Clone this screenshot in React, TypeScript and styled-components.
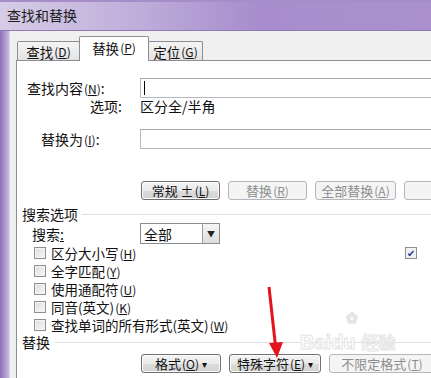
import { ReactNode } from "react";
import styled, { createGlobalStyle, css } from "styled-components";

const GlobalStyle = createGlobalStyle`
    body{
        margin:0;
        font-family:"Noto Sans CJK SC","Liberation Sans",sans-serif;
        background:#ffffff;
    }
`

const Key = ({k}:{k:string}) => <Mn>(<u>{k}</u>)</Mn>

const Button = ({children, disabled, w, menu}:{
    children:ReactNode, disabled?:boolean, w:number, menu?:boolean
}) => (
    <StyledButton disabled={disabled} $w={w}>
        {children}
        {menu && <Caret>▾</Caret>}
    </StyledButton>
)

const Check = ({label, checked}:{label?:ReactNode, checked?:boolean}) => (
    <CheckRow>
        <Box $checked={checked}>{checked && '✔'}</Box>
        {label && <CheckText>{label}</CheckText>}
    </CheckRow>
)

export default function App(){
    return (
        <>
            <GlobalStyle/>
            <Window>
                <TitleBar>查找和替换</TitleBar>
                <Body>
                    <Frame/>
                    <Content>
                        <TabRow>
                            <Tab $w={63}>查找<Key k="D"/></Tab>
                            <Tab $w={70} $active>替换<Key k="P"/></Tab>
                            <Tab $w={55}>定位<Key k="G"/></Tab>
                        </TabRow>
                        <Panel>
                            <FieldRow $top={17}>
                                <Label $pad={10}>查找内容<Key k="N"/>:</Label>
                                <Input><Cursor/></Input>
                            </FieldRow>
                            <FieldRow $top={0}>
                                <Label $pad={0} $right>选项:</Label>
                                <Plain>区分全/半角</Plain>
                            </FieldRow>
                            <FieldRow $top={15}>
                                <Label $pad={24}>替换为<Key k="I"/>:</Label>
                                <Input/>
                            </FieldRow>
                            <ButtonRow $top={32}>
                                <Button w={79}>常规 ± <Key k="L"/></Button>
                                <Button w={79} disabled>替换<Key k="R"/></Button>
                                <Button w={81} disabled>全部替换<Key k="A"/></Button>
                                <Button w={80} disabled>查找</Button>
                            </ButtonRow>
                            <Group $top={7} $indent={5}>搜索选项</Group>
                            <FieldRow $top={2}>
                                <Label $pad={15}>搜索<u>:</u></Label>
                                <Select>
                                    <span>全部</span>
                                    <DropBtn>▼</DropBtn>
                                </Select>
                            </FieldRow>
                            <Checks>
                                <FirstRow>
                                    <Check label={<>区分大小写<Key k="H"/></>}/>
                                    <Check checked/>
                                </FirstRow>
                                <Check label={<>全字匹配<Key k="Y"/></>}/>
                                <Check label={<>使用通配符<Key k="U"/></>}/>
                                <Check label={<>同音(英文)<Key k="K"/></>}/>
                                <Check label={<>查找单词的所有形式(英文)<Key k="W"/></>}/>
                            </Checks>
                            <Group $top={1} $indent={5}>替换</Group>
                            <ButtonRow $top={5}>
                                <Button w={80} menu>格式<Key k="O"/></Button>
                                <Button w={92} menu>特殊字符<Key k="E"/></Button>
                                <Button w={106} disabled>不限定格式<Key k="T"/></Button>
                            </ButtonRow>
                        </Panel>
                    </Content>
                </Body>
                <Watermark>
                    <Paw>❀</Paw>
                    <span>Bai</span><span>du</span><span>经验</span>
                </Watermark>
                <Arrow width="431" height="378" viewBox="0 0 431 378">
                    <line x1="269" y1="287" x2="275.5" y2="346" stroke="#e5141c" strokeWidth="3"/>
                    <polygon points="269,343 283,342 277,358" fill="#e5141c"/>
                </Arrow>
            </Window>
        </>
    )
}

const Window = styled.div`
    position:relative;
    width:431px;
    height:378px;
    overflow:hidden;
    display:flex;
    flex-direction:column;
    font-size:14px;
    line-height:16px;
    color:#111;
`

const TitleBar = styled.div`
    height:30px;
    flex:none;
    display:flex;
    align-items:center;
    padding-left:7px;
    font-size:14px;
    color:#1c1c1c;
    background:linear-gradient(90deg,#d6cce6 0%,#c0afdb 30%,#a78dcd 60%,#aa91ce 100%);
    border-bottom:1px solid #8f7bb2;
    box-shadow:inset 0 2px 0 #a58dc8;
`

const Body = styled.div`
    flex:1;
    display:flex;
    min-height:0;
`

const Frame = styled.div`
    width:10px;
    flex:none;
    background:linear-gradient(90deg,#8e6fb8 0%,#a98fcd 40%,#c6b6de 85%,#e6e6ea 100%);
`

const Content = styled.div`
    flex:1;
    display:flex;
    flex-direction:column;
    background:#f0f0f0;
    min-width:0;
`

const TabRow = styled.div`
    height:29px;
    flex:none;
    display:flex;
    align-items:flex-end;
    padding-left:7px;
`

const Tab = styled.div<{$w:number, $active?:boolean}>`
    width:${p=>p.$w}px;
    box-sizing:border-box;
    display:flex;
    align-items:center;
    justify-content:center;
    border:1px solid #8c8e94;
    border-bottom:none;
    border-radius:2px 2px 0 0;
    font-size:13.5px;
    ${p=>p.$active ? css`
        height:25px;
        background:#ffffff;
        margin-bottom:-1px;
        position:relative;
        z-index:1;
        padding-bottom:3px;
    ` : css`
        height:19px;
        background:linear-gradient(#f4f4f4,#e4e4e4);
        padding-top:1px;
    `}
    & + &{ margin-left:-1px; }
`

const Panel = styled.div`
    flex:1;
    margin-left:6px;
    background:#ffffff;
    border-top:1px solid #8c8e94;
    border-left:1px solid #8c8e94;
    display:flex;
    flex-direction:column;
    min-height:0;
`

const Mn = styled.span`
    font-size:12px;
    margin-left:1px;
    u{ text-decoration:underline; }
`

const FieldRow = styled.div<{$top:number}>`
    display:grid;
    grid-template-columns:123px 1fr;
    align-items:center;
    margin-top:${p=>p.$top}px;
    min-height:15px;
`

const Label = styled.div<{$pad:number, $right?:boolean}>`
    padding-left:${p=>p.$pad}px;
    ${p=>p.$right && css`
        text-align:right;
        padding-right:18px;
    `}
    white-space:nowrap;
`

const Plain = styled.div`
    padding-left:0;
`

const Input = styled.div`
    height:20px;
    box-sizing:border-box;
    border:1px solid #b5b9c0;
    border-right:none;
    border-top-color:#a6aab0;
    background:#ffffff;
    display:flex;
    align-items:center;
    padding-left:3px;
`

const Cursor = styled.span`
    width:1px;
    height:14px;
    background:#000;
`

const ButtonRow = styled.div<{$top:number}>`
    display:flex;
    gap:8px;
    margin-top:${p=>p.$top}px;
    padding-left:124px;
`

const StyledButton = styled.div<{disabled?:boolean, $w:number}>`
    flex:none;
    width:${p=>p.$w}px;
    height:19px;
    box-sizing:border-box;
    border-radius:3px;
    display:flex;
    align-items:center;
    justify-content:center;
    font-size:13px;
    white-space:nowrap;
    ${p=>p.disabled ? css`
        border:1px solid #b4b7bb;
        background:#f4f4f4;
        color:#8d8d8d;
    ` : css`
        border:1px solid #707070;
        background:linear-gradient(#f4f4f4 0%,#ebebeb 50%,#dcdcdc 51%,#d2d2d2 100%);
        color:#111;
        box-shadow:inset 0 0 0 1px #fcfcfc;
    `}
`

const Caret = styled.span`
    font-size:10px;
    margin-left:3px;
`

const Group = styled.div<{$top:number, $indent:number}>`
    display:flex;
    align-items:center;
    gap:4px;
    margin-top:${p=>p.$top}px;
    padding-left:${p=>p.$indent}px;
    height:14px;
    white-space:nowrap;
    &::after{
        content:"";
        flex:1;
        height:1px;
        background:#dcdfe3;
    }
`

const Select = styled.div`
    width:80px;
    height:21px;
    box-sizing:border-box;
    border:1px solid #8a8d92;
    display:flex;
    align-items:center;
    justify-content:space-between;
    padding-left:3px;
    background:#fff;
`

const DropBtn = styled.span`
    width:17px;
    height:19px;
    box-sizing:border-box;
    border-left:1px solid #9a9da2;
    background:linear-gradient(#f6f6f6,#dcdcdc);
    font-size:8px;
    display:flex;
    align-items:center;
    justify-content:center;
    color:#222;
`

const Checks = styled.div`
    display:flex;
    flex-direction:column;
    padding-left:17px;
`

const FirstRow = styled.div`
    display:flex;
    justify-content:space-between;
    padding-right:14px;
`

const CheckRow = styled.div`
    height:18px;
    display:flex;
    align-items:center;
    gap:5px;
    white-space:nowrap;
`

const CheckText = styled.span`
    font-size:13.5px;
`

const Box = styled.span<{$checked?:boolean}>`
    width:12px;
    height:12px;
    box-sizing:border-box;
    border:1px solid #8f8f8f;
    background:linear-gradient(135deg,#dcdcdc,#f8f8f8);
    box-shadow:inset 0 0 0 1px #f4f4f4;
    display:flex;
    align-items:center;
    justify-content:center;
    font-size:10px;
    color:#2a3a8c;
    ${p=>p.$checked && css`
        background:#eef0f6;
    `}
`

const Watermark = styled.div`
    position:absolute;
    left:300px;
    top:331px;
    display:flex;
    align-items:flex-end;
    font-family:"Liberation Sans",sans-serif;
    font-size:20px;
    line-height:22px;
    font-weight:bold;
    color:#ffffff;
    -webkit-text-stroke:1px #e4e4e4;
    pointer-events:none;
    span:last-child{
        font-family:"Noto Sans CJK SC",sans-serif;
        font-size:17px;
        margin-left:6px;
    }
`

const Paw = styled.span`
    position:absolute;
    left:46px;
    top:-20px;
    font-size:14px;
    line-height:14px;
`

const Arrow = styled.svg`
    position:absolute;
    left:0;
    top:0;
    pointer-events:none;
`
